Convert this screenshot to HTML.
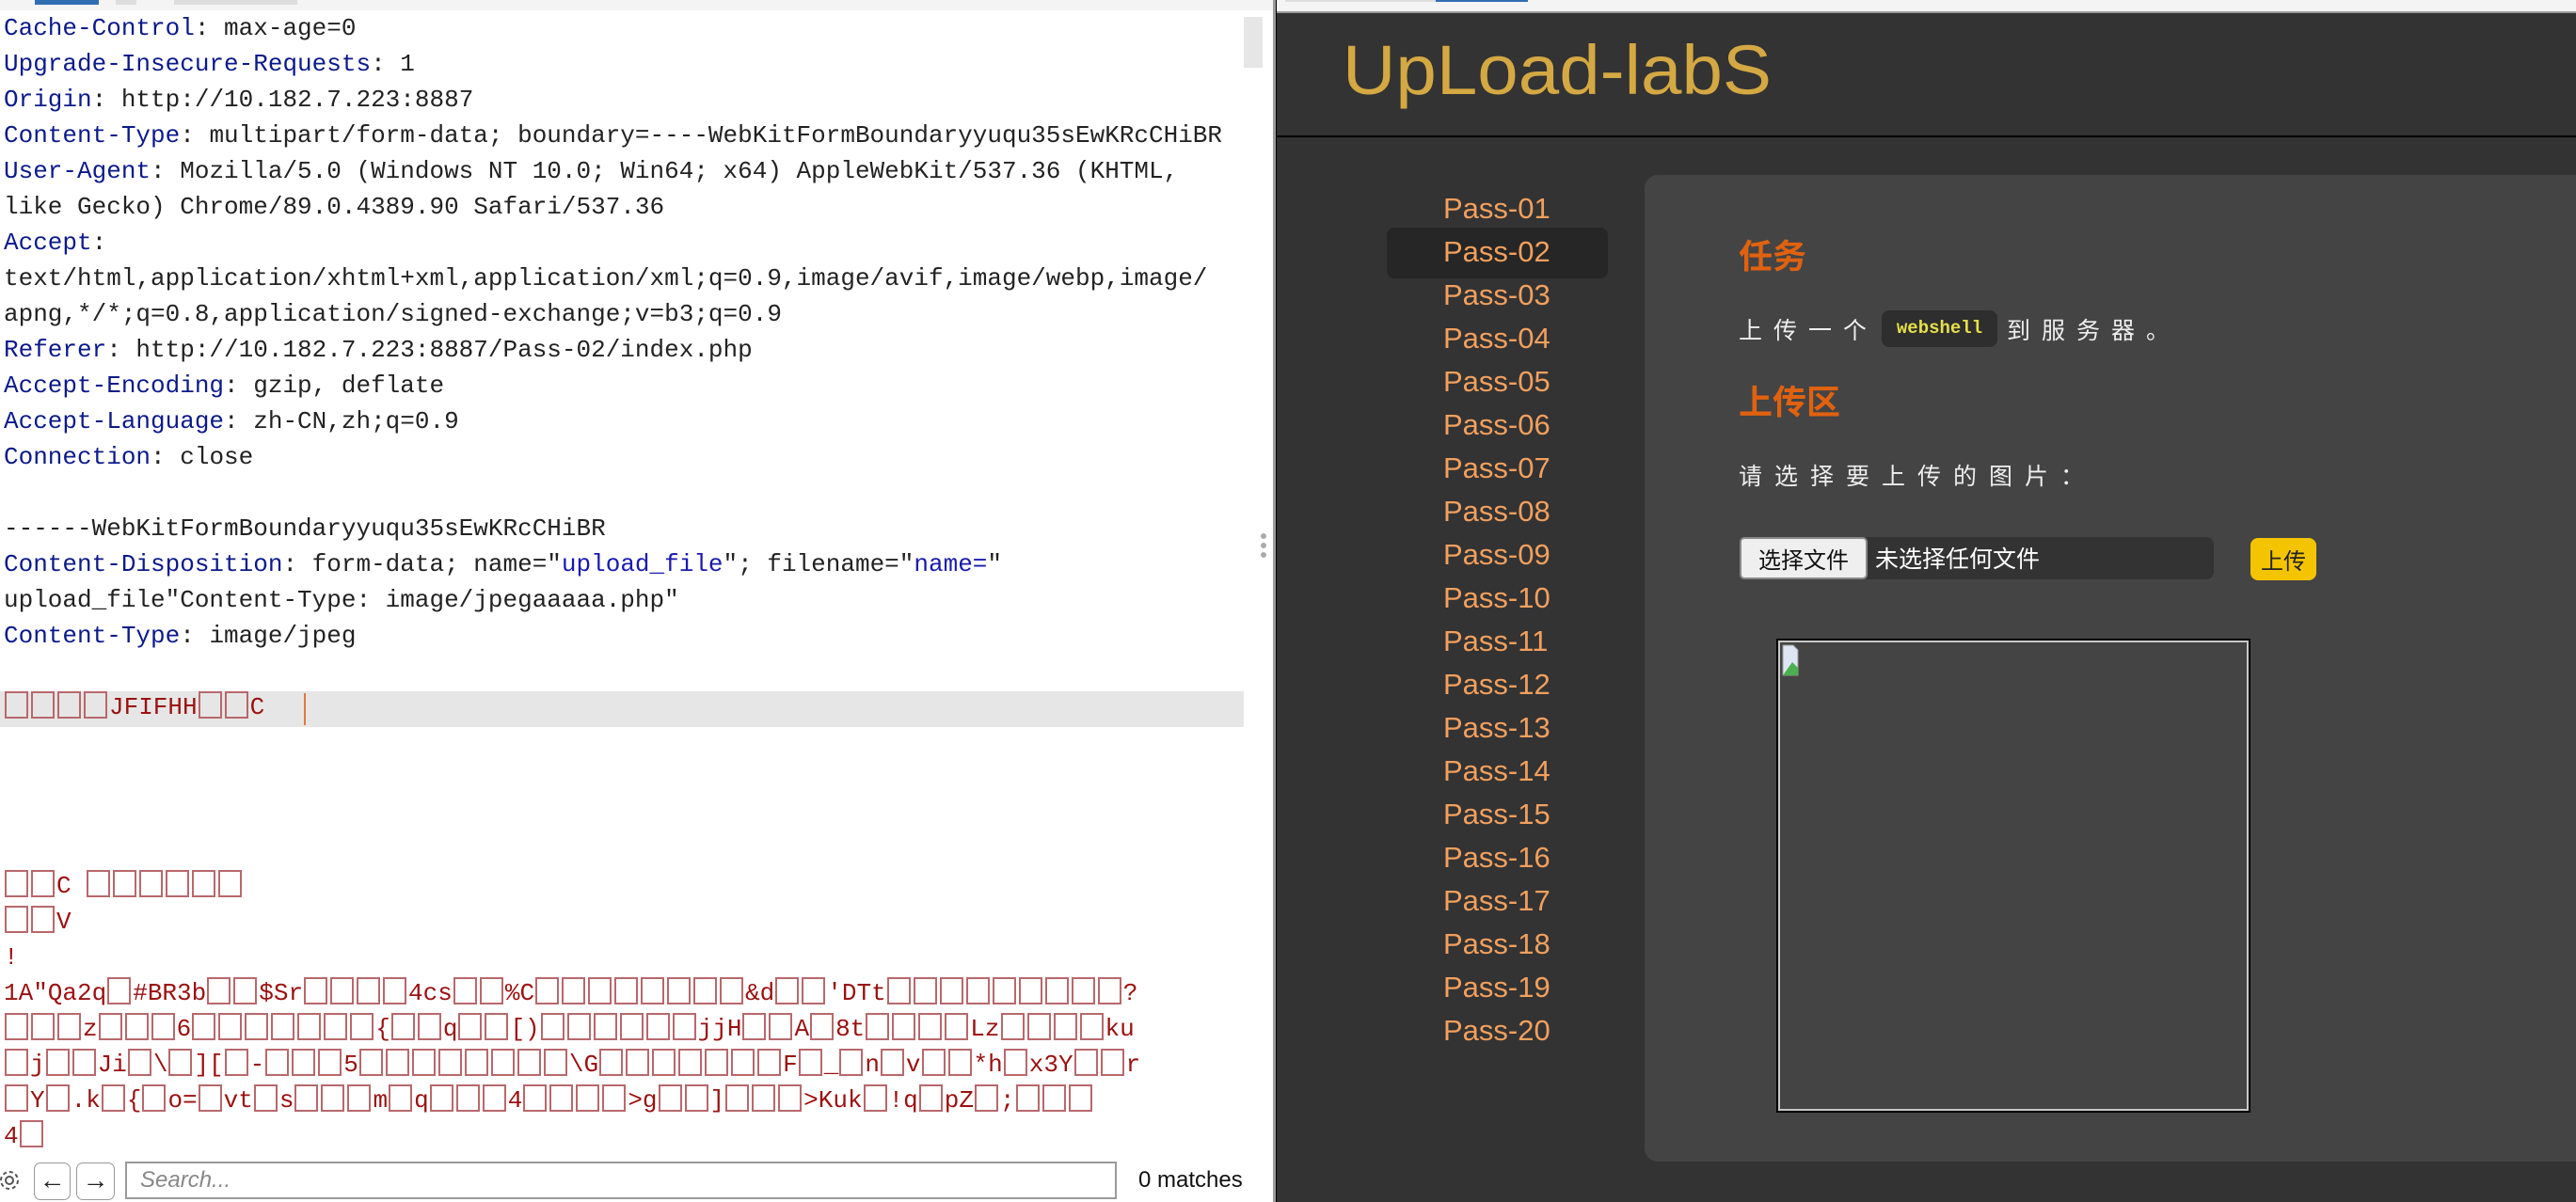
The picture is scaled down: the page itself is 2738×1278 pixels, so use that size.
<!DOCTYPE html>
<html><head><meta charset="utf-8">
<style>
*{margin:0;padding:0;box-sizing:border-box}
html,body{width:2738px;height:1278px;overflow:hidden}
body{background:#fff;position:relative;font-family:"Liberation Sans","Noto Sans CJK SC",sans-serif}
.abs{position:absolute}
#left{left:0;top:0;width:1353px;height:1278px;background:#fff;overflow:hidden}
.code{position:absolute;left:4px;top:11px;font-family:"Liberation Mono","Noto Sans CJK SC",monospace;font-size:26px;line-height:38px;color:#222}
.code div{height:38px;white-space:pre}
.k{color:#0b1a8a}
.q{color:#1a1ab0}
.r{color:#9b1010}
.bx{display:inline-block;color:transparent;font-size:0;letter-spacing:0}
.bx::before{content:""}
i.b{display:inline-block;width:25px;height:29px;border:2px solid #b8686c;margin:0 2px 0 1px;vertical-align:-5px}
#right{left:1357px;top:0;width:1381px;height:1278px;background:#333}
.nav{position:absolute;left:1534px;font-size:31px;color:#f2a05e;line-height:46px;height:46px}
.cjk{font-family:"Noto Sans CJK SC",sans-serif}
</style></head><body>
<div id="left" class="abs">
  <div class="abs" style="left:0;top:0;width:1353px;height:11px;background:#f4f4f4"></div>
  <div class="abs" style="left:37px;top:0;width:68px;height:5px;background:#2f6db3"></div>
  <div class="abs" style="left:123px;top:0;width:22px;height:5px;background:#ddd"></div>
  <div class="abs" style="left:185px;top:0;width:131px;height:5px;background:#ddd"></div>
  <div class="abs" style="left:1322px;top:18px;width:20px;height:54px;background:#e6e6e6"></div>
  <div class="abs" style="left:0;top:735px;width:1322px;height:38px;background:#e6e6e6"></div>
  <div class="abs" style="left:323px;top:737px;width:2px;height:34px;background:#e8763a"></div>
  <div class="code"><div><span class="k">Cache-Control</span>: max-age=0</div><div><span class="k">Upgrade-Insecure-Requests</span>: 1</div><div><span class="k">Origin</span>: http://10.182.7.223:8887</div><div><span class="k">Content-Type</span>: multipart/form-data; boundary=----WebKitFormBoundaryyuqu35sEwKRcCHiBR</div><div><span class="k">User-Agent</span>: Mozilla/5.0 (Windows NT 10.0; Win64; x64) AppleWebKit/537.36 (KHTML,</div><div>like Gecko) Chrome/89.0.4389.90 Safari/537.36</div><div><span class="k">Accept</span>:</div><div>text/html,application/xhtml+xml,application/xml;q=0.9,image/avif,image/webp,image/</div><div>apng,*/*;q=0.8,application/signed-exchange;v=b3;q=0.9</div><div><span class="k">Referer</span>: http://10.182.7.223:8887/Pass-02/index.php</div><div><span class="k">Accept-Encoding</span>: gzip, deflate</div><div><span class="k">Accept-Language</span>: zh-CN,zh;q=0.9</div><div><span class="k">Connection</span>: close</div><div></div><div>------WebKitFormBoundaryyuqu35sEwKRcCHiBR</div><div><span class="k">Content-Disposition</span>: form-data; name="<span class="q">upload_file</span>"; filename="<span class="q">name=</span>"</div><div>upload_file"Content-Type: image/jpegaaaaa.php"</div><div><span class="k">Content-Type</span>: image/jpeg</div><div></div><div class="r"><i class="b"></i><i class="b"></i><i class="b"></i><i class="b"></i>JFIFHH<i class="b"></i><i class="b"></i>C</div><div></div><div></div><div></div><div></div><div class="r"><i class="b"></i><i class="b"></i>C <i class="b"></i><i class="b"></i><i class="b"></i><i class="b"></i><i class="b"></i><i class="b"></i></div><div class="r"><i class="b"></i><i class="b"></i>V</div><div class="r">!</div><div class="r">1A"Qa2q<i class="b"></i>#BR3b<i class="b"></i><i class="b"></i>$Sr<i class="b"></i><i class="b"></i><i class="b"></i><i class="b"></i>4cs<i class="b"></i><i class="b"></i>%C<i class="b"></i><i class="b"></i><i class="b"></i><i class="b"></i><i class="b"></i><i class="b"></i><i class="b"></i><i class="b"></i>&amp;d<i class="b"></i><i class="b"></i>'DTt<i class="b"></i><i class="b"></i><i class="b"></i><i class="b"></i><i class="b"></i><i class="b"></i><i class="b"></i><i class="b"></i><i class="b"></i>?</div><div class="r"><i class="b"></i><i class="b"></i><i class="b"></i>z<i class="b"></i><i class="b"></i><i class="b"></i>6<i class="b"></i><i class="b"></i><i class="b"></i><i class="b"></i><i class="b"></i><i class="b"></i><i class="b"></i>{<i class="b"></i><i class="b"></i>q<i class="b"></i><i class="b"></i>[)<i class="b"></i><i class="b"></i><i class="b"></i><i class="b"></i><i class="b"></i><i class="b"></i>jjH<i class="b"></i><i class="b"></i>A<i class="b"></i>8t<i class="b"></i><i class="b"></i><i class="b"></i><i class="b"></i>Lz<i class="b"></i><i class="b"></i><i class="b"></i><i class="b"></i>ku</div><div class="r"><i class="b"></i>j<i class="b"></i><i class="b"></i>Ji<i class="b"></i>\<i class="b"></i>][<i class="b"></i>-<i class="b"></i><i class="b"></i><i class="b"></i>5<i class="b"></i><i class="b"></i><i class="b"></i><i class="b"></i><i class="b"></i><i class="b"></i><i class="b"></i><i class="b"></i>\G<i class="b"></i><i class="b"></i><i class="b"></i><i class="b"></i><i class="b"></i><i class="b"></i><i class="b"></i>F<i class="b"></i>_<i class="b"></i>n<i class="b"></i>v<i class="b"></i><i class="b"></i>*h<i class="b"></i>x3Y<i class="b"></i><i class="b"></i>r</div><div class="r"><i class="b"></i>Y<i class="b"></i>.k<i class="b"></i>{<i class="b"></i>o=<i class="b"></i>vt<i class="b"></i>s<i class="b"></i><i class="b"></i><i class="b"></i>m<i class="b"></i>q<i class="b"></i><i class="b"></i><i class="b"></i>4<i class="b"></i><i class="b"></i><i class="b"></i><i class="b"></i>&gt;g<i class="b"></i><i class="b"></i>]<i class="b"></i><i class="b"></i><i class="b"></i>&gt;Kuk<i class="b"></i>!q<i class="b"></i>pZ<i class="b"></i>;<i class="b"></i><i class="b"></i><i class="b"></i></div><div class="r">4<i class="b"></i></div></div>
  <div class="abs" style="left:0;top:1230px;width:1353px;height:48px;background:#fff"></div>
  <svg class="abs" style="left:0;top:1238px" width="26" height="34" viewBox="0 0 26 34"><circle cx="10" cy="17" r="9" fill="none" stroke="#555" stroke-width="2" stroke-dasharray="4 3"/><circle cx="10" cy="17" r="4" fill="none" stroke="#555" stroke-width="2"/></svg>
  <div class="abs" style="left:36px;top:1236px;width:39px;height:40px;border:1.5px solid #999;border-radius:7px;font-size:28px;line-height:36px;text-align:center;color:#222">←</div>
  <div class="abs" style="left:81px;top:1236px;width:41px;height:40px;border:1.5px solid #999;border-radius:7px;font-size:28px;line-height:36px;text-align:center;color:#222">→</div>
  <div class="abs" style="left:133px;top:1235px;width:1054px;height:40px;border:2px solid #9a9a9a;background:#fff;font-size:24px;line-height:36px;padding-left:14px;color:#888;font-style:italic">Search...</div>
  <div class="abs" style="left:1210px;top:1236px;font-size:24px;line-height:38px;color:#111">0 matches</div>
  <div class="abs" style="left:1340px;top:567px;width:6px;height:6px;border-radius:3px;background:#aaa"></div>
  <div class="abs" style="left:1340px;top:577px;width:6px;height:6px;border-radius:3px;background:#aaa"></div>
  <div class="abs" style="left:1340px;top:587px;width:6px;height:6px;border-radius:3px;background:#aaa"></div>
</div>
<div class="abs" style="left:1353px;top:0;width:3px;height:1278px;background:#9a9aa0"></div>
<div class="abs" style="left:1356px;top:0;width:1px;height:1278px;background:#000"></div>
<div id="right" class="abs"></div>
<div class="abs" style="left:1357px;top:0;width:1381px;height:12px;background:#f4f4f4"></div>
<div class="abs" style="left:1366px;top:0;width:160px;height:2px;background:#ddd"></div>
<div class="abs" style="left:1526px;top:0;width:98px;height:2px;background:#2f6db3"></div>
<div class="abs" style="left:1357px;top:12px;width:1381px;height:2px;background:#999"></div>
<div class="abs" style="left:1357px;top:144px;width:1381px;height:2px;background:#000"></div>
<svg class="abs" style="left:1425px;top:38px" width="470" height="84" viewBox="0 0 470 84"><text x="2" y="62" font-family="Liberation Sans Narrow,Liberation Sans,sans-serif" font-size="74" fill="#d4a843" textLength="456" lengthAdjust="spacingAndGlyphs">UpLoad-labS</text></svg>
<div class="abs" style="left:1748px;top:186px;width:990px;height:1049px;background:#444;border-radius:14px 0 0 14px"></div>
<div class="abs" style="left:1474px;top:242px;width:235px;height:54px;background:#262626;border-radius:8px"></div>
<div class="nav" style="top:199px">Pass-01</div>
<div class="nav" style="top:245px">Pass-02</div>
<div class="nav" style="top:291px">Pass-03</div>
<div class="nav" style="top:337px">Pass-04</div>
<div class="nav" style="top:383px">Pass-05</div>
<div class="nav" style="top:429px">Pass-06</div>
<div class="nav" style="top:475px">Pass-07</div>
<div class="nav" style="top:521px">Pass-08</div>
<div class="nav" style="top:567px">Pass-09</div>
<div class="nav" style="top:613px">Pass-10</div>
<div class="nav" style="top:659px">Pass-11</div>
<div class="nav" style="top:705px">Pass-12</div>
<div class="nav" style="top:751px">Pass-13</div>
<div class="nav" style="top:797px">Pass-14</div>
<div class="nav" style="top:843px">Pass-15</div>
<div class="nav" style="top:889px">Pass-16</div>
<div class="nav" style="top:935px">Pass-17</div>
<div class="nav" style="top:981px">Pass-18</div>
<div class="nav" style="top:1027px">Pass-19</div>
<div class="nav" style="top:1073px">Pass-20</div>
<div class="abs cjk" style="left:1848px;top:246px;font-size:36px;line-height:48px;font-weight:bold;color:#e0620f">任务</div>
<div class="abs cjk" style="left:1848px;top:333px;font-size:25px;line-height:34px;color:#eee;letter-spacing:12px">上传一个</div>
<div class="abs" style="left:2000px;top:330px;width:123px;height:39px;background:#2e2e2e;border-radius:8px;font-family:'Liberation Mono',monospace;font-weight:bold;font-size:19px;line-height:39px;text-align:center;color:#e6e04a">webshell</div>
<div class="abs cjk" style="left:2133px;top:333px;font-size:25px;line-height:34px;color:#eee;letter-spacing:12px">到服务器。</div>
<div class="abs cjk" style="left:1848px;top:401px;font-size:36px;line-height:48px;font-weight:bold;color:#e0620f">上传区</div>
<div class="abs cjk" style="left:1848px;top:488px;font-size:25px;line-height:34px;color:#eee;letter-spacing:13px">请选择要上传的图片：</div>
<div class="abs" style="left:1849px;top:571px;width:504px;height:45px;background:#333;border-radius:8px"></div>
<div class="abs cjk" style="left:1849px;top:571px;width:136px;height:45px;background:#efefef;border:2px solid #888;border-radius:5px;font-size:24px;line-height:41px;text-align:center;color:#111">选择文件</div>
<div class="abs cjk" style="left:1993px;top:571px;font-size:25px;line-height:45px;color:#fff">未选择任何文件</div>
<div class="abs cjk" style="left:2392px;top:572px;width:70px;height:45px;background:#f5c400;border-radius:8px;font-size:24px;line-height:45px;text-align:center;color:#222">上传</div>
<div class="abs" style="left:1888px;top:679px;width:504px;height:504px;border:2px solid #000;background:#444"><div style="position:absolute;left:0;top:0;right:0;bottom:0;border:2px solid #c8c8c8"></div>
<svg style="position:absolute;left:4px;top:4px" width="18" height="34" viewBox="0 0 18 34"><path d="M1 1h11l5 5v27H1z" fill="#dde6f2" stroke="#999"/><path d="M1 33l10-14 6 6v8z" fill="#4caf50"/></svg></div>
</body></html>
